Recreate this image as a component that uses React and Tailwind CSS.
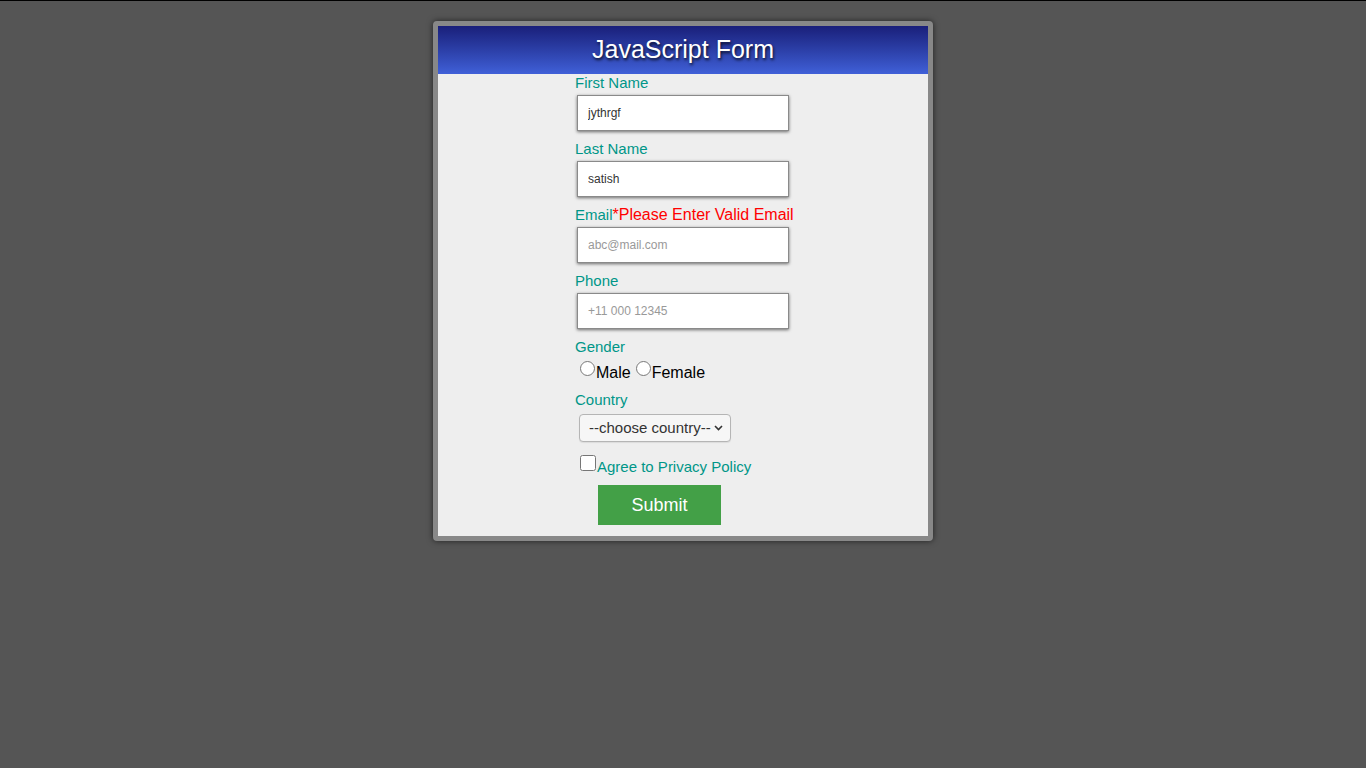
import React, { useState } from 'react';

const labelCls = "block text-[15px] leading-[18px] text-[#009688]";
const inputCls = "block ml-[2px] w-[212px] h-[36px] px-[10px] bg-white border border-[#8a8a8a] shadow-[0_1px_3px_rgba(0,0,0,0.55)] text-[12px] text-[#333] placeholder:text-[#999] outline-none";

export default function App() {
    const [form, setForm] = useState({ first: 'jythrgf', last: 'satish', email: '', phone: '' });
    const onChange = (e) => setForm({ ...form, [e.target.name]: e.target.value });

    return (
        <div className="min-h-screen bg-[#555555] border-t border-black pt-[20px]" style={{ fontFamily: '"Liberation Sans", Arial, sans-serif' }}>
            <div className="mx-auto w-[500px] border-[5px] border-[#888888] rounded-[4px] bg-[#eeeeee] shadow-[0_0_6px_rgba(0,0,0,0.6)]">
                <div className="h-[48px] flex items-center justify-center bg-gradient-to-b from-[#1a1f7a] to-[#4060d8]">
                    <h1 className="text-[25px] text-white [text-shadow:1px_2px_3px_rgba(0,0,0,0.8)]">JavaScript Form</h1>
                </div>
                <form className="mx-auto w-[216px] pb-[11px]" onSubmit={(e) => e.preventDefault()}>
                    <label className={labelCls}>First Name</label>
                    <input name="first" value={form.first} onChange={onChange} className={`${inputCls} mt-[3px]`} />

                    <label className={`${labelCls} mt-[9px]`}>Last Name</label>
                    <input name="last" value={form.last} onChange={onChange} className={`${inputCls} mt-[3px]`} />

                    <label className={`${labelCls} mt-[9px] whitespace-nowrap`}>
                        Email<span className="text-[16px] text-[#ff0000]">*Please Enter Valid Email</span>
                    </label>
                    <input name="email" value={form.email} onChange={onChange} placeholder="abc@mail.com" className={`${inputCls} mt-[3px]`} />

                    <label className={`${labelCls} mt-[9px]`}>Phone</label>
                    <input name="phone" value={form.phone} onChange={onChange} placeholder="+11 000 12345" className={`${inputCls} mt-[3px]`} />

                    <label className={`${labelCls} mt-[9px]`}>Gender</label>
                    <div className="flex items-end h-[26px] text-[16px] leading-[18px] text-black">
                        <input type="radio" name="gender" className="m-0 ml-[5px] mr-[1px] mb-[6px] w-[15px] h-[15px]" />
                        <span>Male</span>
                        <input type="radio" name="gender" className="m-0 ml-[5px] mr-[1px] mb-[6px] w-[15px] h-[15px]" />
                        <span>Female</span>
                    </div>

                    <label className={`${labelCls} mt-[9px]`}>Country</label>
                    <div className="relative ml-[4px] mt-[5px] w-[152px]">
                        <select className="block appearance-none w-[152px] h-[28px] text-[15px] text-[#333] bg-[#f6f6f6] border border-[#b5b5b5] rounded-[4px] pl-[9px] pr-[16px] shadow-[0_1px_1px_rgba(0,0,0,0.08)]">
                            <option>--choose country--</option>
                            <option>India</option>
                            <option>USA</option>
                        </select>
                        <svg className="absolute right-[8px] top-[11px] pointer-events-none" width="9" height="6" viewBox="0 0 9 6">
                            <path d="M1 1 L4.5 4.5 L8 1" fill="none" stroke="#333" strokeWidth="1.6" />
                        </svg>
                    </div>

                    <div className="flex items-start mt-[13px] h-[18px]">
                        <input type="checkbox" className="m-0 ml-[5px] mr-[1px] w-[16px] h-[16px]" />
                        <span className="text-[15px] leading-[18px] mt-[3px] text-[#009688] whitespace-nowrap">Agree to Privacy Policy</span>
                    </div>

                    <button type="submit" className="block ml-[23px] mt-[12px] w-[123px] h-[40px] bg-[#43a047] text-white text-[18px]">Submit</button>
                </form>
            </div>
        </div>
    );
}
